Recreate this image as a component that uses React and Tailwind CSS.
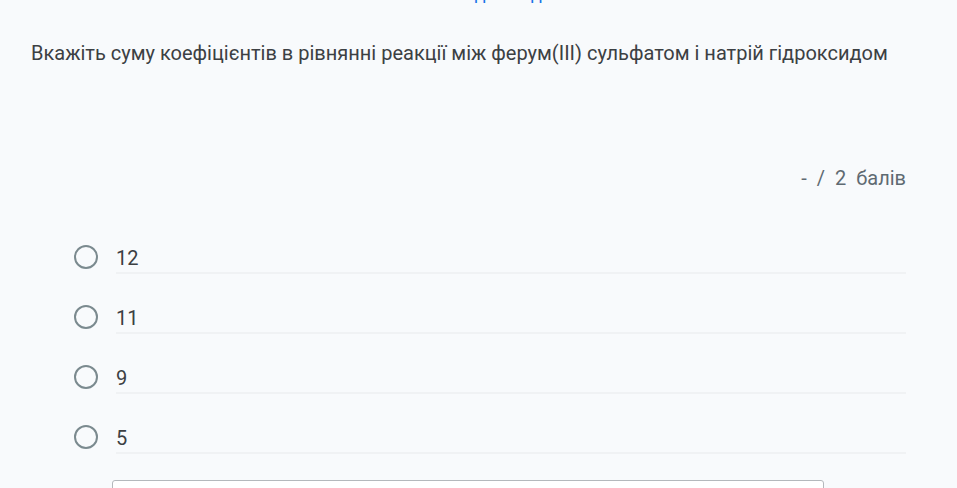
const options = ["12", "11", "9", "5"];

function App() {
  return (
    <main className="min-h-screen bg-[#f8fafc] font-['Roboto',sans-serif] text-[#3c4043] overflow-hidden">
      <div className="h-[3px] overflow-hidden flex justify-center pl-[54px]">
        <span className="text-[#1a73e8] text-[18px] leading-[18px] -mt-[15px] tracking-[2px]">Відповідь</span>
      </div>

      <section className="pl-[31px] pr-[51px]">
        <p className="pt-[36px] text-[20px] leading-[28px] text-[#3c4043]">
          Вкажіть суму коефіцієнтів в рівнянні реакції між ферум(III) сульфатом і натрій гідроксидом
        </p>

        <div className="mt-[97px] flex justify-end gap-[10px] text-[20px] leading-[28px] text-[#5f6a72]">
          <span>-</span>
          <span>/</span>
          <span>2</span>
          <span>балів</span>
        </div>

        <ul className="mt-[52px] pl-[43px]">
          {options.map((o) => (
            <li key={o} className="h-[60px] flex items-start">
              <span className="mt-[1px] w-[24px] h-[24px] rounded-full border-2 border-[#7b8a8f] shrink-0" />
              <div className="ml-[18px] flex-1 h-[30px] border-b-2 border-[#f0f2f4] text-[20px] leading-[28px] text-[#3c4043]">
                {o}
              </div>
            </li>
          ))}
        </ul>

        <div className="ml-[81px] w-[712px] h-[20px] -mt-[4px] border border-[#b4b8bc] rounded-t-[3px] bg-white" />
      </section>
    </main>
  );
}

export default App;
